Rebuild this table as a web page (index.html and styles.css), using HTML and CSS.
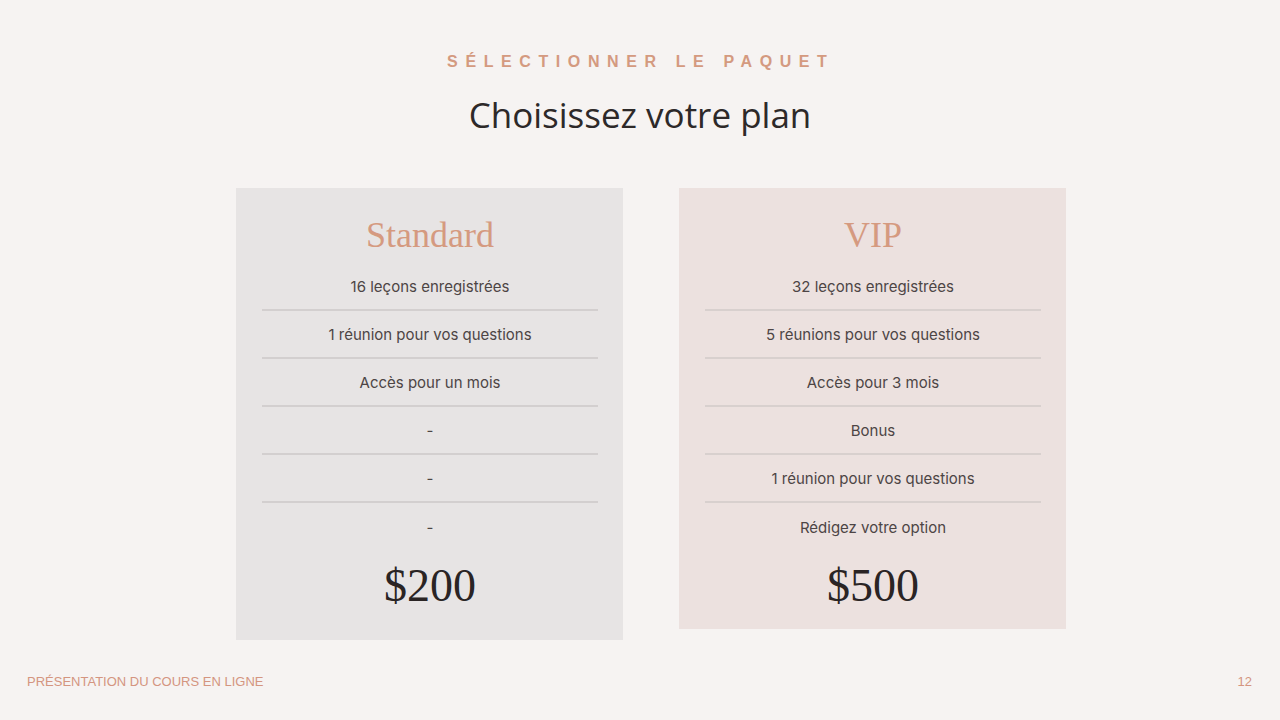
FILE: index.html
```html
<!DOCTYPE html>
<html lang="fr">
<head>
<meta charset="utf-8">
<title>Choisissez votre plan</title>
<link rel="stylesheet" href="styles.css">
</head>
<body>
<main class="slide">
  <header class="head">
    <p class="eyebrow">SÉLECTIONNER LE PAQUET</p>
    <h1 class="title">Choisissez votre plan</h1>
  </header>
  <section class="plans">
    <article class="card card-standard">
      <h2 class="plan-name">Standard</h2>
      <ul class="features">
        <li>16 leçons enregistrées</li>
        <li>1 réunion pour vos questions</li>
        <li>Accès pour un mois</li>
        <li>-</li>
        <li>-</li>
        <li>-</li>
      </ul>
      <p class="price">$200</p>
    </article>
    <article class="card card-vip">
      <h2 class="plan-name">VIP</h2>
      <ul class="features">
        <li>32 leçons enregistrées</li>
        <li>5 réunions pour vos questions</li>
        <li>Accès pour 3 mois</li>
        <li>Bonus</li>
        <li>1 réunion pour vos questions</li>
        <li>Rédigez votre option</li>
      </ul>
      <p class="price">$500</p>
    </article>
  </section>
  <footer class="foot">
    <span class="foot-label">PRÉSENTATION DU COURS EN LIGNE</span>
    <span class="foot-page">12</span>
  </footer>
</main>
</body>
</html>
```
FILE: styles.css
```css
* { box-sizing: border-box; }
html, body { margin: 0; padding: 0; }
body {
  width: 1280px;
  height: 720px;
  background: #f6f3f2;
  font-family: "Inter", "Liberation Sans", sans-serif;
  overflow: hidden;
}
.slide {
  width: 1280px;
  height: 720px;
  display: flex;
  flex-direction: column;
  align-items: center;
}
.head {
  display: flex;
  flex-direction: column;
  align-items: center;
  padding-top: 52px;
}
.eyebrow {
  margin: 0;
  font-family: "Liberation Sans", Arial, sans-serif;
  font-weight: 700;
  font-size: 16px;
  line-height: 20px;
  letter-spacing: 0.475em;
  margin-right: calc(-0.475em + 6px);
  color: #d49a80;
}
.title {
  margin: 21px 0 0;
  font-family: "Open Sans", sans-serif;
  font-weight: 400;
  font-size: 35px;
  line-height: 44px;
  color: #2d2929;
}
.plans {
  display: flex;
  align-items: flex-start;
  gap: 56px;
  margin-top: 51px;
  margin-left: 22px;
}
.card {
  width: 387px;
  padding: 19px 25px 0 26px;
  display: flex;
  flex-direction: column;
  align-items: stretch;
}
.card-standard { background: #e7e4e4; height: 452px; }
.card-vip { background: #ece1df; height: 441px; }
.plan-name {
  margin: 0;
  text-align: center;
  font-family: "Liberation Serif", "Times New Roman", serif;
  font-weight: 400;
  font-size: 36px;
  line-height: 56px;
  color: #d59a80;
}
.features {
  list-style: none;
  margin: 0;
  padding: 0;
}
.features li {
  height: 48px;
  display: flex;
  align-items: center;
  justify-content: center;
  font-size: 15px;
  color: #4d4545;
  border-bottom: 2px solid #d3cfcf;
}
.features li:last-child { border-bottom: none; }
.card-vip .features li { border-bottom-color: #d8d0ce; }
.card-vip .features li:last-child { border-bottom: none; }
.price {
  margin: 10px 0 0;
  text-align: center;
  font-family: "Liberation Serif", "Times New Roman", serif;
  font-size: 46px;
  line-height: 50px;
  color: #2a2424;
}
.foot {
  margin-top: auto;
  width: 100%;
  display: flex;
  justify-content: space-between;
  align-items: center;
  padding: 0 28px 30px 27px;
  font-family: "Liberation Sans", Arial, sans-serif;
  font-size: 13px;
  line-height: 16px;
  color: #d49580;
}
```
